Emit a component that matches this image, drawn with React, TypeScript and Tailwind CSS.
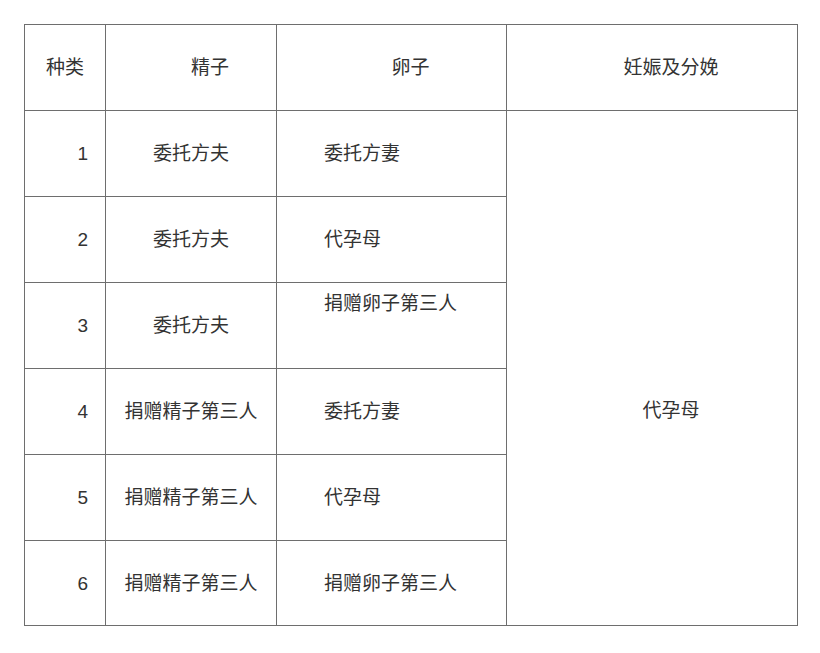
const rows: [string, string, string][] = [
  ['1', '委托方夫', '委托方妻'],
  ['2', '委托方夫', '代孕母'],
  ['3', '委托方夫', '捐赠卵子第三人'],
  ['4', '捐赠精子第三人', '委托方妻'],
  ['5', '捐赠精子第三人', '代孕母'],
  ['6', '捐赠精子第三人', '捐赠卵子第三人'],
]

export default function App() {
  return (
    <div className="w-[820px] h-[653px] bg-white pt-[24px] pl-[24px] font-['Liberation_Sans','Noto_Sans_CJK_SC',sans-serif] text-[19px] leading-[25px] text-[#333]">
      <table className="table-fixed border-collapse w-[773px]">
        <colgroup>
          <col className="w-[81px]" />
          <col className="w-[171px]" />
          <col className="w-[230px]" />
          <col className="w-[291px]" />
        </colgroup>
        <thead>
          <tr className="h-[86px]">
            <th className="border border-[#6e6e6e] font-normal text-center">种类</th>
            <th className="border border-[#6e6e6e] font-normal text-center pl-[38px]">精子</th>
            <th className="border border-[#6e6e6e] font-normal text-center pl-[38px]">卵子</th>
            <th className="border border-[#6e6e6e] font-normal text-center pl-[38px]">妊娠及分娩</th>
          </tr>
        </thead>
        <tbody>
          {rows.map(([n, sperm, egg], i) => (
            <tr key={n} className={i === 5 ? 'h-[85px]' : 'h-[86px]'}>
              <td className="border border-[#6e6e6e] text-right pr-[17px]">{n}</td>
              <td className="border border-[#6e6e6e] text-center">{sperm}</td>
              <td
                className={
                  'border border-[#6e6e6e] text-left pl-[47px] ' +
                  (i === 2 ? 'align-top pt-[8px]' : 'align-middle')
                }
              >
                {egg}
              </td>
              {i === 0 && (
                <td rowSpan={6} className="border border-[#6e6e6e] text-center pl-[38px] pt-[84px]">
                  代孕母
                </td>
              )}
            </tr>
          ))}
        </tbody>
      </table>
    </div>
  )
}
